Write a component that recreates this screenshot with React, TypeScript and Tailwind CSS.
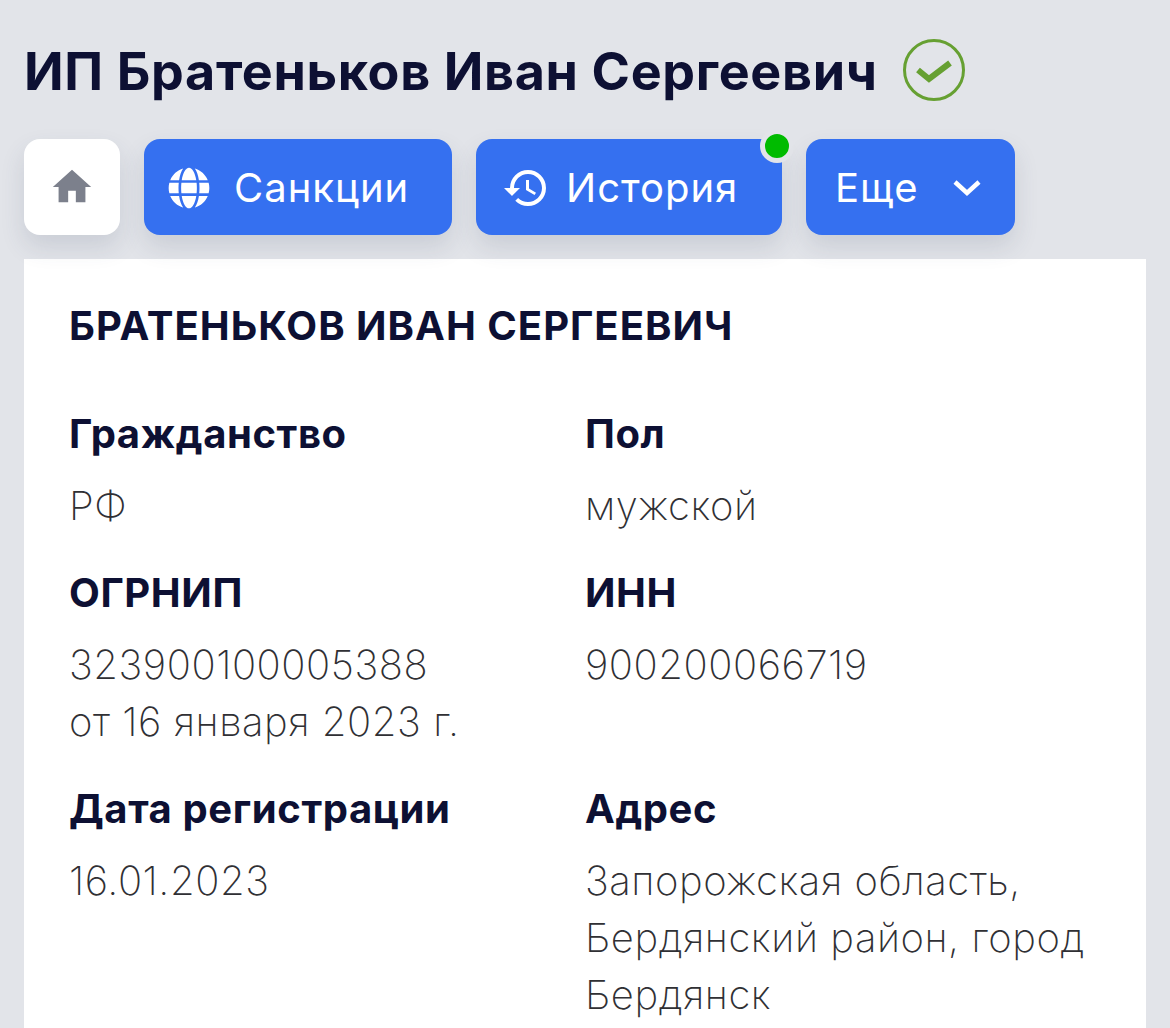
import { MdHome, MdHistory } from 'react-icons/md';
import { FaGlobe } from 'react-icons/fa';

const tabShadow = 'shadow-[0_12px_24px_rgba(60,70,100,0.14)]';
const tabClass = `relative flex h-24 items-center rounded-2xl bg-[#3570f0] pt-[2px] text-[40px] tracking-[1px] text-white ${tabShadow}`;

function Field({ label, lines }: { label: string; lines: string[] }) {
  return (
    <div>
      <div className="text-[40px] leading-[46px] font-bold tracking-[0.6px] text-[#0d1033]">{label}</div>
      <div className="mt-[20px] text-[40px] leading-[57px] font-[250] tracking-[0.55px] text-[#303034]">
        {lines.map((line) => (
          <div key={line}>{line}</div>
        ))}
      </div>
    </div>
  );
}

export default function App() {
  return (
    <div
      className="h-[1028px] overflow-hidden bg-[#e2e4e9] pt-[36px] pl-6"
      style={{ fontFamily: 'Inter, "Noto Sans", sans-serif' }}
    >
      {/* заголовок */}
      <div className="flex h-[72px] items-center">
        <h1 className="text-[52px] font-bold tracking-[0.66px] text-[#0d1033]">ИП Братеньков Иван Сергеевич</h1>
        <svg className="mb-[4px] ml-[24px]" width="64" height="64" viewBox="0 0 64 64" fill="none">
          <circle cx="32" cy="32" r="29.5" stroke="#66a032" strokeWidth="3" />
          <path d="M16 32l11 9 21-16" stroke="#66a032" strokeWidth="6" />
        </svg>
      </div>

      {/* вкладки */}
      <div className="mt-[31px] flex gap-6">
        <div className={`flex h-24 w-24 items-center justify-center rounded-2xl bg-white ${tabShadow}`}>
          <MdHome size={46} color="#7c808c" />
        </div>
        <div className={`${tabClass} w-[308px] pl-6`}>
          <FaGlobe size={42} />
          <span className="ml-[24px]">Санкции</span>
        </div>
        <div className={`${tabClass} w-[306px] pl-[26px]`}>
          <MdHistory size={48} />
          <span className="ml-[16px]">История</span>
          <span className="absolute -top-[10px] -right-[12px] h-[34px] w-[34px] rounded-full border-[5px] border-[#e2e4e9] bg-[#00bb00]" />
        </div>
        <div className={`${tabClass} w-[209px] pl-[29px]`}>
          <span>Еще</span>
          <svg className="ml-[34px]" width="30" height="18" viewBox="0 0 30 18" fill="none">
            <path d="M3 3l12 11L27 3" stroke="white" strokeWidth="4.5" />
          </svg>
        </div>
      </div>

      {/* карточка */}
      <div className="mt-6 h-[800px] w-[1122px] bg-white pt-[44px] pl-[45px]">
        <div className="text-[40px] leading-[46px] font-bold tracking-[1px] text-[#0d1033]">БРАТЕНЬКОВ ИВАН СЕРГЕЕВИЧ</div>
        <div className="mt-[62px] grid grid-cols-[516px_1fr] gap-y-[36px]">
          <Field label="Гражданство" lines={['РФ']} />
          <Field label="Пол" lines={['мужской']} />
          <Field label="ОГРНИП" lines={['323900100005388', 'от 16 января 2023 г.']} />
          <Field label="ИНН" lines={['900200066719']} />
          <Field label="Дата регистрации" lines={['16.01.2023']} />
          <Field label="Адрес" lines={['Запорожская область,', 'Бердянский район, город', 'Бердянск']} />
        </div>
      </div>
    </div>
  );
}
